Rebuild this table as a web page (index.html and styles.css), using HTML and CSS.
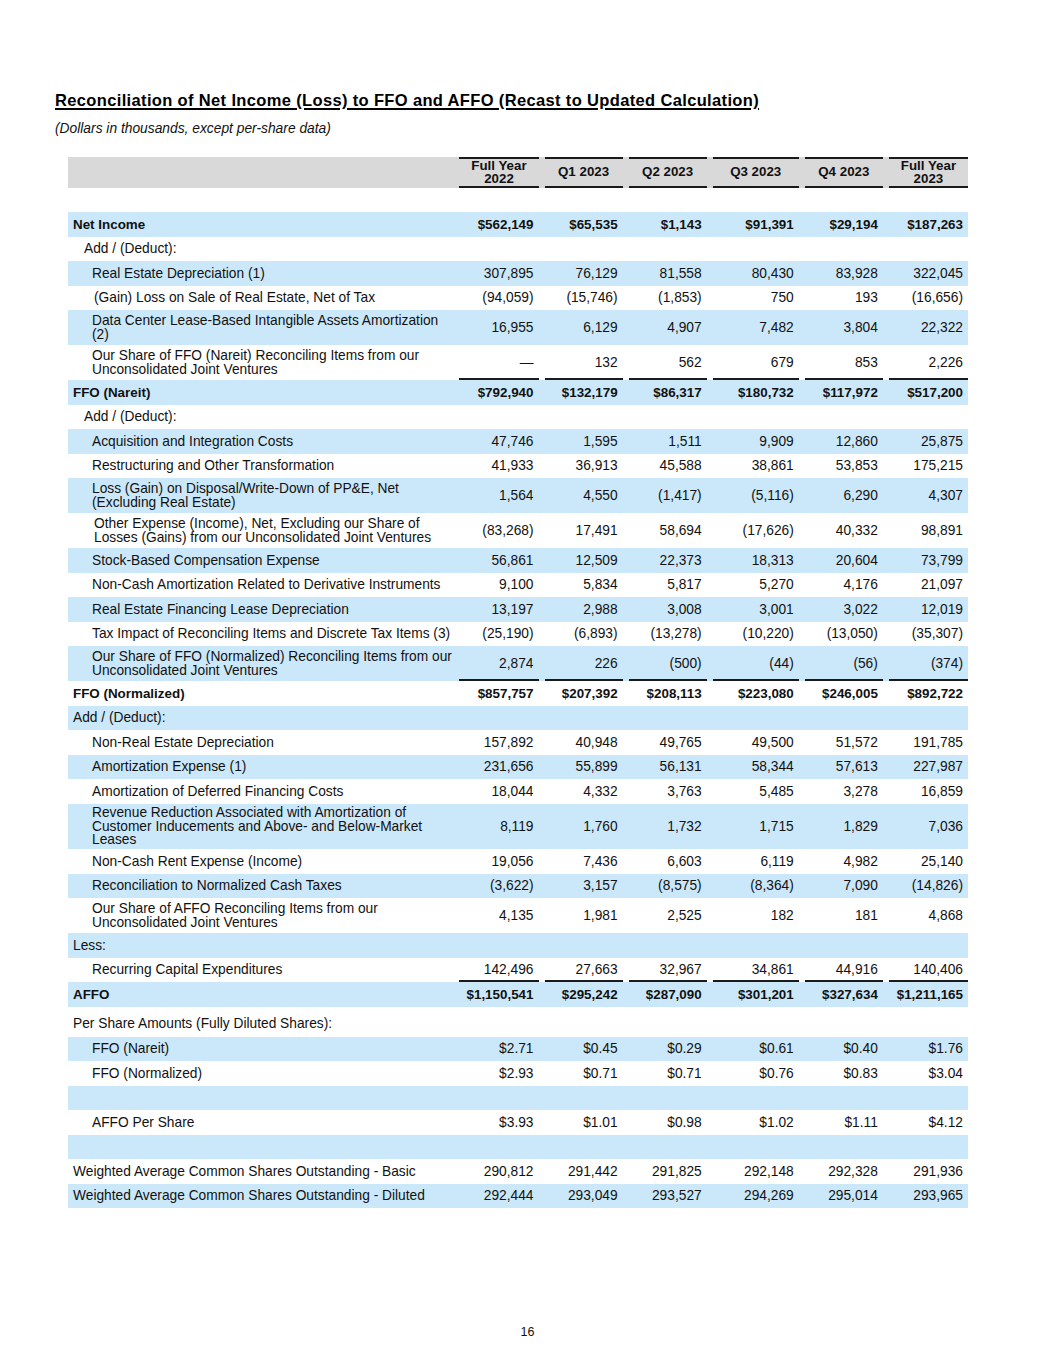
FILE: index.html
```html
<!DOCTYPE html>
<html lang="en">
<head>
<meta charset="utf-8">
<title>Reconciliation of Net Income (Loss) to FFO and AFFO</title>
<link rel="stylesheet" href="styles.css">
</head>
<body>
<div class="page">
  <h1 class="title">Reconciliation of Net Income (Loss) to FFO and AFFO (Recast to Updated Calculation)</h1>
  <p class="subtitle">(Dollars in thousands, except per-share data)</p>

  <table class="recon">
    <colgroup>
      <col class="c-label"><col class="c-fy"><col class="c-q"><col class="c-q"><col class="c-q3"><col class="c-q"><col class="c-fy">
    </colgroup>
    <thead>
      <tr class="head">
        <th class="label"></th>
        <th class="num">Full Year<br>2022</th>
        <th class="num">Q1 2023</th>
        <th class="num">Q2 2023</th>
        <th class="num">Q3 2023</th>
        <th class="num">Q4 2023</th>
        <th class="num">Full Year<br>2023</th>
      </tr>
    </thead>
    <tbody>
      <tr class="spacer"><td class="label"></td><td class="num"></td><td class="num"></td><td class="num"></td><td class="num"></td><td class="num"></td><td class="num"></td></tr>

      <tr class="b bold"><td class="label">Net Income</td><td class="num">$562,149</td><td class="num">$65,535</td><td class="num">$1,143</td><td class="num">$91,391</td><td class="num">$29,194</td><td class="num">$187,263</td></tr>
      <tr><td class="label l1">Add / (Deduct):</td><td class="num"></td><td class="num"></td><td class="num"></td><td class="num"></td><td class="num"></td><td class="num"></td></tr>
      <tr class="b"><td class="label l2">Real Estate Depreciation (1)</td><td class="num">307,895</td><td class="num">76,129</td><td class="num">81,558</td><td class="num">80,430</td><td class="num">83,928</td><td class="num">322,045</td></tr>
      <tr><td class="label l2s">(Gain) Loss on Sale of Real Estate, Net of Tax</td><td class="num">(94,059)</td><td class="num">(15,746)</td><td class="num">(1,853)</td><td class="num">750</td><td class="num">193</td><td class="num">(16,656)</td></tr>
      <tr class="b"><td class="label l2">Data Center Lease-Based Intangible Assets Amortization<br>(2)</td><td class="num">16,955</td><td class="num">6,129</td><td class="num">4,907</td><td class="num">7,482</td><td class="num">3,804</td><td class="num">22,322</td></tr>
      <tr class="ul"><td class="label l2">Our Share of FFO (Nareit) Reconciling Items from our<br>Unconsolidated Joint Ventures</td><td class="num">—</td><td class="num">132</td><td class="num">562</td><td class="num">679</td><td class="num">853</td><td class="num">2,226</td></tr>
      <tr class="b bold"><td class="label">FFO (Nareit)</td><td class="num">$792,940</td><td class="num">$132,179</td><td class="num">$86,317</td><td class="num">$180,732</td><td class="num">$117,972</td><td class="num">$517,200</td></tr>

      <tr><td class="label l1">Add / (Deduct):</td><td class="num"></td><td class="num"></td><td class="num"></td><td class="num"></td><td class="num"></td><td class="num"></td></tr>
      <tr class="b"><td class="label l2">Acquisition and Integration Costs</td><td class="num">47,746</td><td class="num">1,595</td><td class="num">1,511</td><td class="num">9,909</td><td class="num">12,860</td><td class="num">25,875</td></tr>
      <tr><td class="label l2">Restructuring and Other Transformation</td><td class="num">41,933</td><td class="num">36,913</td><td class="num">45,588</td><td class="num">38,861</td><td class="num">53,853</td><td class="num">175,215</td></tr>
      <tr class="b"><td class="label l2">Loss (Gain) on Disposal/Write-Down of PP&amp;E, Net<br>(Excluding Real Estate)</td><td class="num">1,564</td><td class="num">4,550</td><td class="num">(1,417)</td><td class="num">(5,116)</td><td class="num">6,290</td><td class="num">4,307</td></tr>
      <tr><td class="label l2s">Other Expense (Income), Net, Excluding our Share of<br>Losses (Gains) from our Unconsolidated Joint Ventures</td><td class="num">(83,268)</td><td class="num">17,491</td><td class="num">58,694</td><td class="num">(17,626)</td><td class="num">40,332</td><td class="num">98,891</td></tr>
      <tr class="b"><td class="label l2">Stock-Based Compensation Expense</td><td class="num">56,861</td><td class="num">12,509</td><td class="num">22,373</td><td class="num">18,313</td><td class="num">20,604</td><td class="num">73,799</td></tr>
      <tr><td class="label l2">Non-Cash Amortization Related to Derivative Instruments</td><td class="num">9,100</td><td class="num">5,834</td><td class="num">5,817</td><td class="num">5,270</td><td class="num">4,176</td><td class="num">21,097</td></tr>
      <tr class="b"><td class="label l2">Real Estate Financing Lease Depreciation</td><td class="num">13,197</td><td class="num">2,988</td><td class="num">3,008</td><td class="num">3,001</td><td class="num">3,022</td><td class="num">12,019</td></tr>
      <tr><td class="label l2">Tax Impact of Reconciling Items and Discrete Tax Items (3)</td><td class="num">(25,190)</td><td class="num">(6,893)</td><td class="num">(13,278)</td><td class="num">(10,220)</td><td class="num">(13,050)</td><td class="num">(35,307)</td></tr>
      <tr class="b ul"><td class="label l2">Our Share of FFO (Normalized) Reconciling Items from our<br>Unconsolidated Joint Ventures</td><td class="num">2,874</td><td class="num">226</td><td class="num">(500)</td><td class="num">(44)</td><td class="num">(56)</td><td class="num">(374)</td></tr>
      <tr class="bold"><td class="label">FFO (Normalized)</td><td class="num">$857,757</td><td class="num">$207,392</td><td class="num">$208,113</td><td class="num">$223,080</td><td class="num">$246,005</td><td class="num">$892,722</td></tr>

      <tr class="b"><td class="label">Add / (Deduct):</td><td class="num"></td><td class="num"></td><td class="num"></td><td class="num"></td><td class="num"></td><td class="num"></td></tr>
      <tr><td class="label l2">Non-Real Estate Depreciation</td><td class="num">157,892</td><td class="num">40,948</td><td class="num">49,765</td><td class="num">49,500</td><td class="num">51,572</td><td class="num">191,785</td></tr>
      <tr class="b"><td class="label l2">Amortization Expense (1)</td><td class="num">231,656</td><td class="num">55,899</td><td class="num">56,131</td><td class="num">58,344</td><td class="num">57,613</td><td class="num">227,987</td></tr>
      <tr><td class="label l2">Amortization of Deferred Financing Costs</td><td class="num">18,044</td><td class="num">4,332</td><td class="num">3,763</td><td class="num">5,485</td><td class="num">3,278</td><td class="num">16,859</td></tr>
      <tr class="b three"><td class="label l2">Revenue Reduction Associated with Amortization of<br>Customer Inducements and Above- and Below-Market<br>Leases</td><td class="num">8,119</td><td class="num">1,760</td><td class="num">1,732</td><td class="num">1,715</td><td class="num">1,829</td><td class="num">7,036</td></tr>
      <tr><td class="label l2">Non-Cash Rent Expense (Income)</td><td class="num">19,056</td><td class="num">7,436</td><td class="num">6,603</td><td class="num">6,119</td><td class="num">4,982</td><td class="num">25,140</td></tr>
      <tr class="b"><td class="label l2">Reconciliation to Normalized Cash Taxes</td><td class="num">(3,622)</td><td class="num">3,157</td><td class="num">(8,575)</td><td class="num">(8,364)</td><td class="num">7,090</td><td class="num">(14,826)</td></tr>
      <tr><td class="label l2">Our Share of AFFO Reconciling Items from our<br>Unconsolidated Joint Ventures</td><td class="num">4,135</td><td class="num">1,981</td><td class="num">2,525</td><td class="num">182</td><td class="num">181</td><td class="num">4,868</td></tr>
      <tr class="b"><td class="label">Less:</td><td class="num"></td><td class="num"></td><td class="num"></td><td class="num"></td><td class="num"></td><td class="num"></td></tr>
      <tr class="ul"><td class="label l2">Recurring Capital Expenditures</td><td class="num">142,496</td><td class="num">27,663</td><td class="num">32,967</td><td class="num">34,861</td><td class="num">44,916</td><td class="num">140,406</td></tr>
      <tr class="b bold"><td class="label">AFFO</td><td class="num">$1,150,541</td><td class="num">$295,242</td><td class="num">$287,090</td><td class="num">$301,201</td><td class="num">$327,634</td><td class="num">$1,211,165</td></tr>

      <tr class="pershare"><td class="label">Per Share Amounts (Fully Diluted Shares):</td><td class="num"></td><td class="num"></td><td class="num"></td><td class="num"></td><td class="num"></td><td class="num"></td></tr>
      <tr class="b"><td class="label l2">FFO (Nareit)</td><td class="num">$2.71</td><td class="num">$0.45</td><td class="num">$0.29</td><td class="num">$0.61</td><td class="num">$0.40</td><td class="num">$1.76</td></tr>
      <tr><td class="label l2">FFO (Normalized)</td><td class="num">$2.93</td><td class="num">$0.71</td><td class="num">$0.71</td><td class="num">$0.76</td><td class="num">$0.83</td><td class="num">$3.04</td></tr>
      <tr class="b"><td class="label"></td><td class="num"></td><td class="num"></td><td class="num"></td><td class="num"></td><td class="num"></td><td class="num"></td></tr>
      <tr><td class="label l2">AFFO Per Share</td><td class="num">$3.93</td><td class="num">$1.01</td><td class="num">$0.98</td><td class="num">$1.02</td><td class="num">$1.11</td><td class="num">$4.12</td></tr>
      <tr class="b"><td class="label"></td><td class="num"></td><td class="num"></td><td class="num"></td><td class="num"></td><td class="num"></td><td class="num"></td></tr>
      <tr><td class="label">Weighted Average Common Shares Outstanding - Basic</td><td class="num">290,812</td><td class="num">291,442</td><td class="num">291,825</td><td class="num">292,148</td><td class="num">292,328</td><td class="num">291,936</td></tr>
      <tr class="b"><td class="label">Weighted Average Common Shares Outstanding - Diluted</td><td class="num">292,444</td><td class="num">293,049</td><td class="num">293,527</td><td class="num">294,269</td><td class="num">295,014</td><td class="num">293,965</td></tr>
    </tbody>
  </table>

  <div class="pagenum">16</div>
</div>
</body>
</html>
```

FILE: styles.css
```css
html, body {
  margin: 0;
  padding: 0;
  background: #ffffff;
}

body {
  font-family: "Liberation Sans", Arial, sans-serif;
  color: #111111;
}

.page {
  width: 1055px;
  padding: 90px 0 0 55px;
  box-sizing: border-box;
}

.title {
  margin: 0;
  font-size: 16.5px;
  letter-spacing: 0.35px;
  line-height: 20px;
  font-weight: bold;
  text-decoration: underline;
  text-underline-offset: 2px;
  text-decoration-thickness: 1.5px;
  color: #000;
}

.subtitle {
  margin: 11px 0 0 0;
  font-size: 13.8px;
  line-height: 16px;
  font-style: italic;
  color: #111;
}

.recon {
  margin: 20px 0 0 13px;
  width: 900px;
  table-layout: fixed;
  border-collapse: collapse;
  font-size: 13.75px;
}

.c-label { width: 385px; }
.c-fy { width: 85px; }
.c-q { width: 84px; }
.c-q3 { width: 92px; }

.recon td,
.recon th {
  padding: 4px 5px 4px 0;
  line-height: 13.5px;
  vertical-align: middle;
}

.recon tbody tr {
  height: 24.5px;
}

.recon .label {
  text-align: left;
  white-space: nowrap;
  padding-left: 5px;
}

.recon .l1 { padding-left: 16px; }
.recon .l2 { padding-left: 24px; }
.recon .l2s { padding-left: 26px; }

.recon .num {
  text-align: right;
  white-space: nowrap;
}

/* header */
.recon .head {
  background: #d9d9d9;
  height: 31px;
}

.recon .head th {
  font-weight: bold;
  font-size: 13.33px;
  padding: 2px 0 2px 6px;
  line-height: 12.5px;
}

.recon .head th.num {
  text-align: center;
  background-image: linear-gradient(#1a1a1a, #1a1a1a), linear-gradient(#1a1a1a, #1a1a1a);
  background-size: calc(100% - 6px) 2px, calc(100% - 6px) 2px;
  background-position: right top, right bottom;
  background-repeat: no-repeat;
}

.recon .spacer { height: 24px; }

.recon .b { background: #cbe8fa; }

.recon .bold td {
  font-weight: bold;
  font-size: 13.4px;
}

.recon .ul td.num {
  background-image: linear-gradient(#1a1a1a, #1a1a1a);
  background-size: calc(100% - 6px) 2px;
  background-position: right bottom;
  background-repeat: no-repeat;
}

.recon .three td {
  padding-top: 2.5px;
  padding-bottom: 2.5px;
}

.recon .pershare { height: 30px; }
.recon .pershare td { padding-top: 7px; padding-bottom: 3px; }

.pagenum {
  width: 945px;
  margin-top: 117px;
  text-align: center;
  font-size: 12.5px;
  line-height: 14px;
  color: #111;
}
```
